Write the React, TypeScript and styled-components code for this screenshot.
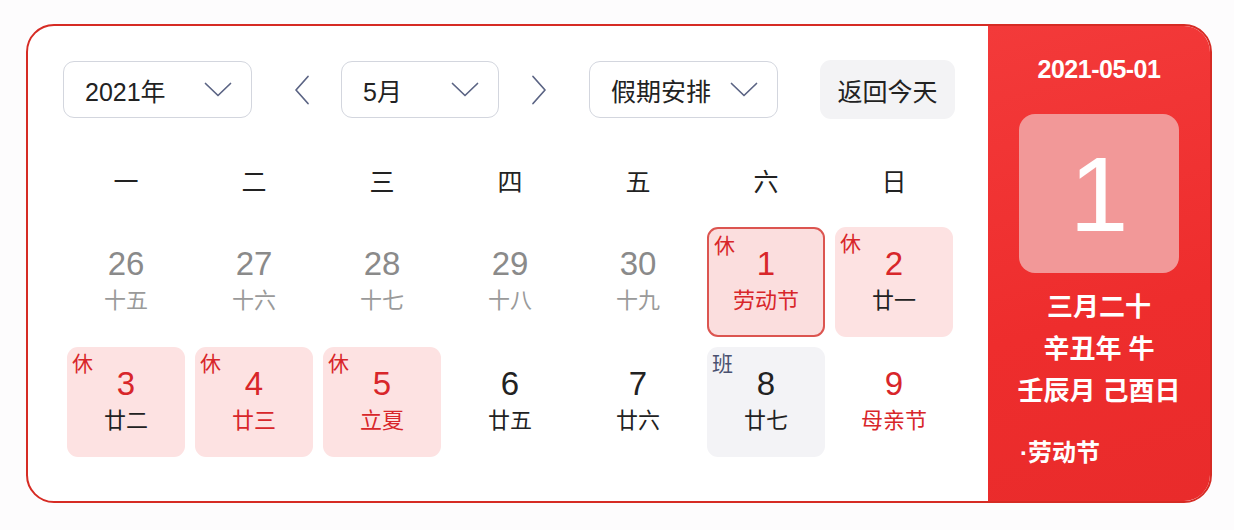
import React from "react";
import styled, { createGlobalStyle } from "styled-components";

const Global = createGlobalStyle`
  html, body { margin: 0; padding: 0; background: #fdfcfd; }
  body { font-family: "Liberation Sans", "Noto Sans CJK SC", sans-serif; }
`;

const Page = styled.div`
  padding: 24px 0 0 26px;
`;

const Card = styled.div`
  width: 1186px;
  height: 479px;
  box-sizing: border-box;
  border: 2px solid #d62b24;
  border-radius: 28px;
  overflow: hidden;
  display: flex;
  background: #ffffff;
`;

const Left = styled.div`
  width: 960px;
  box-sizing: border-box;
  padding: 34px 0 0 35px;
  display: flex;
  flex-direction: column;
`;

const Toolbar = styled.div`
  display: flex;
  align-items: center;
  height: 59px;
`;

const Select = styled.div<{ $w: number; $ml?: number }>`
  width: ${(p) => p.$w}px;
  height: 57px;
  margin-left: ${(p) => p.$ml ?? 0}px;
  box-sizing: border-box;
  border: 1px solid #d3d6de;
  border-radius: 11px;
  display: flex;
  align-items: center;
  justify-content: space-between;
  padding: 0 19px 0 21px;
  font-size: 25px;
  color: #222;
`;

const Arrow = styled.div<{ $ml: number }>`
  margin-left: ${(p) => p.$ml}px;
  width: 16px;
  height: 30px;
  display: flex;
  align-items: center;
  justify-content: center;
`;

const TodayBtn = styled.div`
  margin-left: 42px;
  width: 135px;
  height: 59px;
  border-radius: 11px;
  background: #f3f3f5;
  display: flex;
  align-items: center;
  justify-content: center;
  font-size: 25px;
  color: #222;
`;

const Grid = styled.div`
  margin-left: 4px;
  display: grid;
  grid-template-columns: repeat(7, 118px);
  column-gap: 10px;
  row-gap: 10px;
`;

const WeekGrid = styled(Grid)`
  margin-top: 43px;
`;

const DayGrid = styled(Grid)`
  margin-top: 25px;
`;

const Week = styled.div`
  height: 40px;
  line-height: 40px;
  text-align: center;
  font-size: 25px;
  color: #222;
`;

type Kind = "plain" | "rest" | "today" | "work";

const Cell = styled.div<{ $kind: Kind }>`
  position: relative;
  height: 110px;
  box-sizing: border-box;
  border-radius: 11px;
  display: flex;
  flex-direction: column;
  align-items: center;
  padding-top: ${(p) => (p.$kind === "today" ? 18 : 20)}px;
  background: ${(p) =>
    p.$kind === "rest" ? "#fde2e2" : p.$kind === "today" ? "#fbdede" : p.$kind === "work" ? "#f3f3f6" : "transparent"};
  border: ${(p) => (p.$kind === "today" ? "2px solid #dc5550" : "none")};
`;

const Num = styled.div<{ $c: string }>`
  font-size: 33px;
  line-height: 34px;
  color: ${(p) => p.$c};
`;

const Lunar = styled.div<{ $c: string }>`
  margin-top: 8px;
  font-size: 22px;
  line-height: 24px;
  color: ${(p) => p.$c};
`;

const Tag = styled.span<{ $c: string }>`
  position: absolute;
  left: 5px;
  top: 5px;
  font-size: 21px;
  line-height: 24px;
  color: ${(p) => p.$c};
`;

const Right = styled.div`
  flex: 1;
  background: linear-gradient(165deg, #f33a3a 0%, #ee2d2d 60%, #e92b2b 100%);
  display: flex;
  flex-direction: column;
  align-items: center;
  padding-top: 28px;
  color: #fff;
`;

const DateTxt = styled.div`
  font-size: 25px;
  font-weight: 700;
  line-height: 30px;
  letter-spacing: -0.5px;
`;

const Big = styled.div`
  margin-top: 30px;
  width: 160px;
  height: 159px;
  border-radius: 16px;
  background: #f29898;
  display: flex;
  align-items: center;
  justify-content: center;
  font-size: 106px;
  line-height: 1;
`;

const LunarInfo = styled.div`
  margin-top: 13px;
  font-size: 26px;
  font-weight: 700;
  line-height: 42px;
  text-align: center;
`;

const Fest = styled.div`
  align-self: flex-start;
  margin: 26px 0 0 32px;
  font-size: 24px;
  font-weight: 700;
  line-height: 30px;
`;

const Down = () => (
  <svg width="28" height="15" viewBox="0 0 28 15" fill="none">
    <path d="M1.5 1.5 L14 13.5 L26.5 1.5" stroke="#5b6484" strokeWidth="1.7" strokeLinecap="round" strokeLinejoin="round" />
  </svg>
);

const Side = ({ dir }: { dir: "l" | "r" }) => (
  <svg width="16" height="30" viewBox="0 0 16 30" fill="none">
    <path
      d={dir === "l" ? "M14 1.5 L2 15 L14 28.5" : "M2 1.5 L14 15 L2 28.5"}
      stroke="#5b6484"
      strokeWidth="1.7"
      strokeLinecap="round"
      strokeLinejoin="round"
    />
  </svg>
);

const RED = "#d8262a";
const BLACK = "#222";
const GREY = "#8a8a8a";
const LGREY = "#9a9a9a";

type Day = { n: string; l: string; kind: Kind; nc: string; lc: string; tag?: string; tc?: string };

const days: Day[] = [
  { n: "26", l: "十五", kind: "plain", nc: GREY, lc: LGREY },
  { n: "27", l: "十六", kind: "plain", nc: GREY, lc: LGREY },
  { n: "28", l: "十七", kind: "plain", nc: GREY, lc: LGREY },
  { n: "29", l: "十八", kind: "plain", nc: GREY, lc: LGREY },
  { n: "30", l: "十九", kind: "plain", nc: GREY, lc: LGREY },
  { n: "1", l: "劳动节", kind: "today", nc: RED, lc: RED, tag: "休", tc: RED },
  { n: "2", l: "廿一", kind: "rest", nc: RED, lc: BLACK, tag: "休", tc: RED },
  { n: "3", l: "廿二", kind: "rest", nc: RED, lc: BLACK, tag: "休", tc: RED },
  { n: "4", l: "廿三", kind: "rest", nc: RED, lc: RED, tag: "休", tc: RED },
  { n: "5", l: "立夏", kind: "rest", nc: RED, lc: RED, tag: "休", tc: RED },
  { n: "6", l: "廿五", kind: "plain", nc: BLACK, lc: BLACK },
  { n: "7", l: "廿六", kind: "plain", nc: BLACK, lc: BLACK },
  { n: "8", l: "廿七", kind: "work", nc: BLACK, lc: BLACK, tag: "班", tc: "#4a5170" },
  { n: "9", l: "母亲节", kind: "plain", nc: RED, lc: RED },
];

const weeks = ["一", "二", "三", "四", "五", "六", "日"];

export default function App() {
  return (
    <>
      <Global />
      <Page>
        <Card>
          <Left>
            <Toolbar>
              <Select $w={189}>
                <span>2021年</span>
                <Down />
              </Select>
              <Arrow $ml={42}>
                <Side dir="l" />
              </Arrow>
              <Select $w={158} $ml={31}>
                <span>5月</span>
                <Down />
              </Select>
              <Arrow $ml={32}>
                <Side dir="r" />
              </Arrow>
              <Select $w={189} $ml={42}>
                <span>假期安排</span>
                <Down />
              </Select>
              <TodayBtn>返回今天</TodayBtn>
            </Toolbar>
            <WeekGrid>
              {weeks.map((w) => (
                <Week key={w}>{w}</Week>
              ))}
            </WeekGrid>
            <DayGrid>
              {days.map((d) => (
                <Cell key={d.n} $kind={d.kind}>
                  {d.tag && <Tag $c={d.tc!}>{d.tag}</Tag>}
                  <Num $c={d.nc}>{d.n}</Num>
                  <Lunar $c={d.lc}>{d.l}</Lunar>
                </Cell>
              ))}
            </DayGrid>
          </Left>
          <Right>
            <DateTxt>2021-05-01</DateTxt>
            <Big>1</Big>
            <LunarInfo>
              三月二十
              <br />
              辛丑年 牛
              <br />
              壬辰月 己酉日
            </LunarInfo>
            <Fest>·劳动节</Fest>
          </Right>
        </Card>
      </Page>
    </>
  );
}
